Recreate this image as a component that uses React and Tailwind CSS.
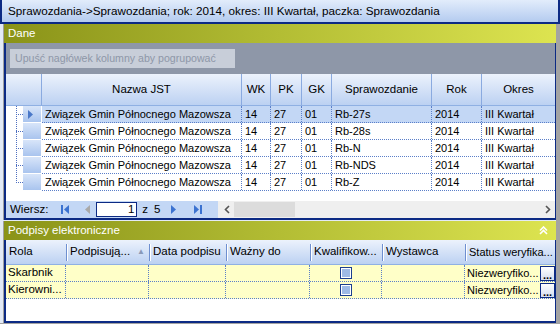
import React from 'react';

const font = { fontFamily: '"Liberation Sans", Arial, sans-serif' };

const rows = [
  { name: 'Związek Gmin Północnego Mazowsza', wk: '14', pk: '27', gk: '01', spr: 'Rb-27s', rok: '2014', okres: 'III Kwartał' },
  { name: 'Związek Gmin Północnego Mazowsza', wk: '14', pk: '27', gk: '01', spr: 'Rb-28s', rok: '2014', okres: 'III Kwartał' },
  { name: 'Związek Gmin Północnego Mazowsza', wk: '14', pk: '27', gk: '01', spr: 'Rb-N', rok: '2014', okres: 'III Kwartał' },
  { name: 'Związek Gmin Północnego Mazowsza', wk: '14', pk: '27', gk: '01', spr: 'Rb-NDS', rok: '2014', okres: 'III Kwartał' },
  { name: 'Związek Gmin Północnego Mazowsza', wk: '14', pk: '27', gk: '01', spr: 'Rb-Z', rok: '2014', okres: 'III Kwartał' },
];

const cols = [
  { key: 'name', label: 'Nazwa JST', w: 'w-[200px]' },
  { key: 'wk', label: 'WK', w: 'w-[29px]' },
  { key: 'pk', label: 'PK', w: 'w-[31px]' },
  { key: 'gk', label: 'GK', w: 'w-[30px]' },
  { key: 'spr', label: 'Sprawozdanie', w: 'w-[100px]' },
  { key: 'rok', label: 'Rok', w: 'w-[50px]' },
  { key: 'okres', label: 'Okres', w: 'flex-1' },
];

const sigCols = [
  { label: 'Rola', w: 'w-[60px]' },
  { label: 'Podpisują...', w: 'w-[83px]', sort: true },
  { label: 'Data podpisu', w: 'w-[77px]' },
  { label: 'Ważny do', w: 'w-[84px]' },
  { label: 'Kwalifikow...', w: 'w-[72px]' },
  { label: 'Wystawca', w: 'w-[83px]' },
  { label: 'Status weryfika...', w: 'flex-1', small: true },
];

const sigRows = ['Skarbnik', 'Kierowni...'];

const PanelHeader = ({ title, collapse }) => (
  <div className="h-[19px] flex items-center justify-between pl-[4px] pr-[8px] text-white text-[11.5px] bg-gradient-to-r from-[#8a9318] via-[#b3bd34] to-[#dde450]">
    <span>{title}</span>
    {collapse && (
      <svg width="9" height="9" viewBox="0 0 9 9">
        <path d="M1 4.5 L4.5 1 L8 4.5 M1 8 L4.5 4.5 L8 8" stroke="white" strokeWidth="1.6" fill="none" />
      </svg>
    )}
  </div>
);

const NavIcon = ({ type }) => {
  const blue = '#3b72d0';
  if (type === 'first')
    return (
      <svg width="11" height="11" viewBox="0 0 11 11">
        <rect x="1" y="1" width="2" height="9" fill={blue} />
        <path d="M9 1 L4 5.5 L9 10 Z" fill={blue} />
      </svg>
    );
  if (type === 'prev')
    return (
      <svg width="8" height="11" viewBox="0 0 8 11">
        <path d="M7 1 L2 5.5 L7 10 Z" fill="#a9a9a9" />
      </svg>
    );
  if (type === 'next')
    return (
      <svg width="8" height="11" viewBox="0 0 8 11">
        <path d="M1 1 L6 5.5 L1 10 Z" fill={blue} />
      </svg>
    );
  return (
    <svg width="11" height="11" viewBox="0 0 11 11">
      <path d="M2 1 L7 5.5 L2 10 Z" fill={blue} />
      <rect x="8" y="1" width="2" height="9" fill={blue} />
    </svg>
  );
};

export default function App() {
  return (
    <div style={font} className="w-[560px] h-[324px] overflow-hidden bg-[#e3eaf6] text-black text-[11px] flex flex-col">
      <div className="h-[24px] shrink-0 flex items-center pl-[6px] border-x-2 border-b-2 border-[#0c2a84] bg-gradient-to-b from-[#e2ecfb] to-[#b4cbef] text-[11.7px]">
        Sprawozdania-&gt;Sprawozdania; rok: 2014, okres: III Kwartał, paczka: Sprawozdania
      </div>

      <div className="flex-1 flex flex-col pl-[3px] pr-[4px] bg-[#a3a3a3]">
        <div className="flex flex-col bg-[#e3eaf6] -ml-[3px] pl-[3px]">
          <div className="border-l border-[#a0a0a0]">
            <PanelHeader title="Dane" />
            <div className="border-l-2 border-r border-b-2 border-[#0c2a84] flex flex-col">
              <div className="h-[31px] bg-[#8e97a8] flex items-center pl-[4px]">
                <div className="h-[19px] w-[225px] bg-[#c8ced9] text-[#8e97a8] flex items-center pl-[5px] text-[10.6px]">
                  Upuść nagłówek kolumny aby pogrupować
                </div>
              </div>
              <div className="bg-white">
                <div className="h-[32px] flex bg-gradient-to-b from-[#ecf2fc] to-[#bcd1f2] border-b border-[#8fb0e3]">
                  <div className="w-[36px] border-r border-[#8aaae0]" />
                  {cols.map((c) => (
                    <div
                      key={c.key}
                      className={`${c.w} flex items-center justify-center border-r border-[#8aaae0] last:border-r-0 text-[11.5px]`}
                    >
                      {c.label}
                    </div>
                  ))}
                </div>
                <div className="relative">
                  <div className="absolute left-[10px] top-0 h-[77px] border-l border-dotted border-[#4e6fc0]" />
                  {rows.map((r, i) => (
                    <div key={i} className="h-[17px] flex">
                      <div className="w-[17px] flex items-center">
                        <div className="ml-[10px] w-[7px] border-t border-dotted border-[#4e6fc0]" />
                      </div>
                      <div className="w-[19px] flex items-center pl-[5px] bg-gradient-to-b from-[#d8e5f9] to-[#a9c4ee] border-b border-r border-white">
                        {i === 0 && (
                          <svg width="5" height="9" viewBox="0 0 5 9">
                            <path d="M0 0 L5 4.5 L0 9 Z" fill="#4a78c8" />
                          </svg>
                        )}
                      </div>
                      <div className={`flex-1 flex border-b border-dotted border-[#5b7fc9] ${i === 0 ? 'bg-[#c3d7f5]' : 'bg-white'}`}>
                        {cols.map((c) => (
                          <div
                            key={c.key}
                            className={`${c.w} flex items-center pl-[3px] border-r border-dotted border-[#5b7fc9] last:border-r-0 whitespace-nowrap overflow-hidden text-[11px]`}
                          >
                            {r[c.key]}
                          </div>
                        ))}
                      </div>
                    </div>
                  ))}
                  <div className="h-[10px]" />
                </div>
                <div className="h-[17px] flex">
                  <div className="w-[212px] bg-[#c3d7f5] flex items-center pl-[4px]">
                    <span className="text-[11.5px] mr-[12px]">Wiersz:</span>
                    <span className="mr-[12px] flex"><NavIcon type="first" /></span>
                    <span className="mr-[5px] flex"><NavIcon type="prev" /></span>
                    <div className="w-[41px] h-[15px] bg-white border border-[#0c2a84] flex items-center justify-end pr-[2px] text-[11.5px]">1</div>
                    <span className="ml-[5px] text-[11.5px]">z</span>
                    <span className="ml-[6px] text-[11.5px]">5</span>
                    <span className="ml-[9px] flex"><NavIcon type="next" /></span>
                    <span className="ml-[14px] flex"><NavIcon type="last" /></span>
                  </div>
                  <div className="flex-1 bg-[#efefef] flex items-center">
                    <svg width="13" height="11" viewBox="0 0 13 11" className="ml-[3px]">
                      <path d="M8 2 L4.5 5.5 L8 9" stroke="#555" strokeWidth="1.6" fill="none" />
                    </svg>
                    <div className="w-[61px] h-[15px] bg-[#dcdcdc]" />
                    <div className="flex-1" />
                    <svg width="13" height="11" viewBox="0 0 13 11" className="mr-[1px]">
                      <path d="M5 2 L8.5 5.5 L5 9" stroke="#555" strokeWidth="1.6" fill="none" />
                    </svg>
                  </div>
                </div>
              </div>
            </div>
          </div>
          <div className="h-[1px]" />
          <div className="border-l border-[#a0a0a0]">
            <PanelHeader title="Podpisy elektroniczne" collapse />
            <div className="border-l-2 border-r border-b-2 border-[#0c2a84] bg-white h-[83px]">
              <div className="h-[25px] flex bg-gradient-to-b from-[#ecf2fc] to-[#bcd1f2] border-b border-[#8fb0e3]">
                {sigCols.map((c, i) => (
                  <div key={i} className={`${c.w} flex items-center overflow-hidden`}>
                    {i > 0 && <div className="w-[2px] h-[17px] shrink-0 border-l border-[#6e8fd0] border-r border-r-white" />}
                    <span className={`${c.small ? 'text-[11px]' : 'text-[11.5px]'} whitespace-nowrap ${i === 0 ? 'pl-[3px]' : 'pl-[2px]'}`}>{c.label}</span>
                    {c.sort && <span className="ml-auto mr-[4px] text-[8px] text-[#8a9ab8]">▲</span>}
                  </div>
                ))}
              </div>
              {sigRows.map((r, i) => (
                <div key={i} className="h-[17px] flex bg-[#ffffc8] border-b border-dotted border-[#5b7fc9]">
                  {sigCols.map((c, j) => (
                    <div
                      key={j}
                      className={`${c.w} flex items-center border-r border-dotted border-[#5b7fc9] last:border-r-0 whitespace-nowrap overflow-hidden text-[11.5px] ${j === 4 ? 'justify-center' : 'pl-[2px]'}`}
                    >
                      {j === 0 && r}
                      {j === 4 && (
                        <div className="w-[12px] h-[12px] border border-[#1c3f8f] bg-white p-[1px]">
                          <div className="w-full h-full bg-[#9fbbe6]" />
                        </div>
                      )}
                      {j === 6 && (
                        <>
                          <span className="text-[11px]">Niezweryfiko...</span>
                          <div className="ml-auto w-[15px] h-[15px] shrink-0 border border-[#0c2a84] bg-gradient-to-b from-white to-[#d4def0] flex items-end justify-center leading-[10px] font-bold text-[11px]">
                            ...
                          </div>
                        </>
                      )}
                    </div>
                  ))}
                </div>
              ))}
            </div>
          </div>
        </div>
      </div>
    </div>
  );
}
